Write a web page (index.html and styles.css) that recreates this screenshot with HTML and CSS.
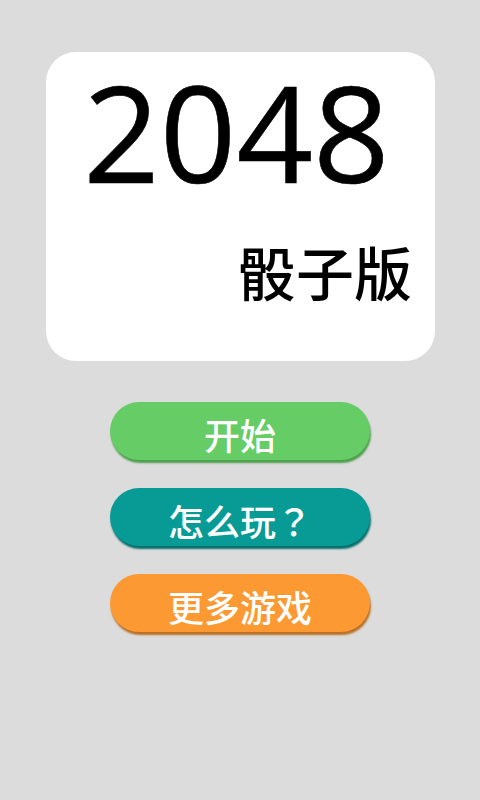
FILE: index.html
```html
<!DOCTYPE html>
<html lang="zh-CN">
<head>
<meta charset="utf-8">
<link rel="stylesheet" href="styles.css">
</head>
<body>
<div class="screen">
  <div class="card">
    <div class="title">2048</div>
    <div class="subtitle">骰子版</div>
  </div>
  <div class="buttons">
    <div class="btn green">开始</div>
    <div class="btn teal">怎么玩<span class="q" lang="zh-TW">？</span></div>
    <div class="btn orange">更多游戏</div>
  </div>
</div>
</body>
</html>
```
FILE: styles.css
```css
html, body {
  margin: 0;
  padding: 0;
  background: #dcdcdc;
}
.screen {
  width: 480px;
  height: 800px;
  display: flex;
  flex-direction: column;
  align-items: center;
  padding-top: 52px;
  box-sizing: border-box;
  font-family: "Open Sans", "Noto Sans CJK SC", sans-serif;
}
.card {
  width: 389px;
  height: 309px;
  margin-left: 1px;
  background: #fff;
  border-radius: 30px;
  box-sizing: border-box;
  display: flex;
  flex-direction: column;
}
.title {
  font-family: "Open Sans", sans-serif;
  font-size: 134px;
  line-height: 1;
  color: #000;
  text-align: center;
  margin-top: 12px;
  margin-left: -8px;
  -webkit-text-stroke: 0.6px #000;
}
.subtitle {
  font-family: "Noto Sans CJK SC", sans-serif;
  font-size: 58px;
  font-weight: 500;
  line-height: 1;
  color: #000;
  align-self: flex-end;
  margin-right: 23px;
  margin-top: 44px;
}
.buttons {
  display: flex;
  flex-direction: column;
  gap: 28px;
  margin-top: 41px;
}
.btn {
  width: 260px;
  height: 58px;
  border-radius: 29px;
  color: #fff;
  font-family: "Noto Sans CJK SC", sans-serif;
  font-size: 36px;
  font-weight: 500;
  line-height: 58px;
  padding-top: 3px;
  box-sizing: border-box;
  text-align: center;
}
.q {
  font-family: "Noto Sans CJK TC", sans-serif;
}
.green {
  background: #66cc66;
  box-shadow: 1px 3px 2px #4d9e4d;
}
.teal {
  background: #089b96;
  box-shadow: 1px 3px 2px #066f6b;
}
.orange {
  background: #fd9933;
  box-shadow: 1px 3px 2px #b87027;
}
```
